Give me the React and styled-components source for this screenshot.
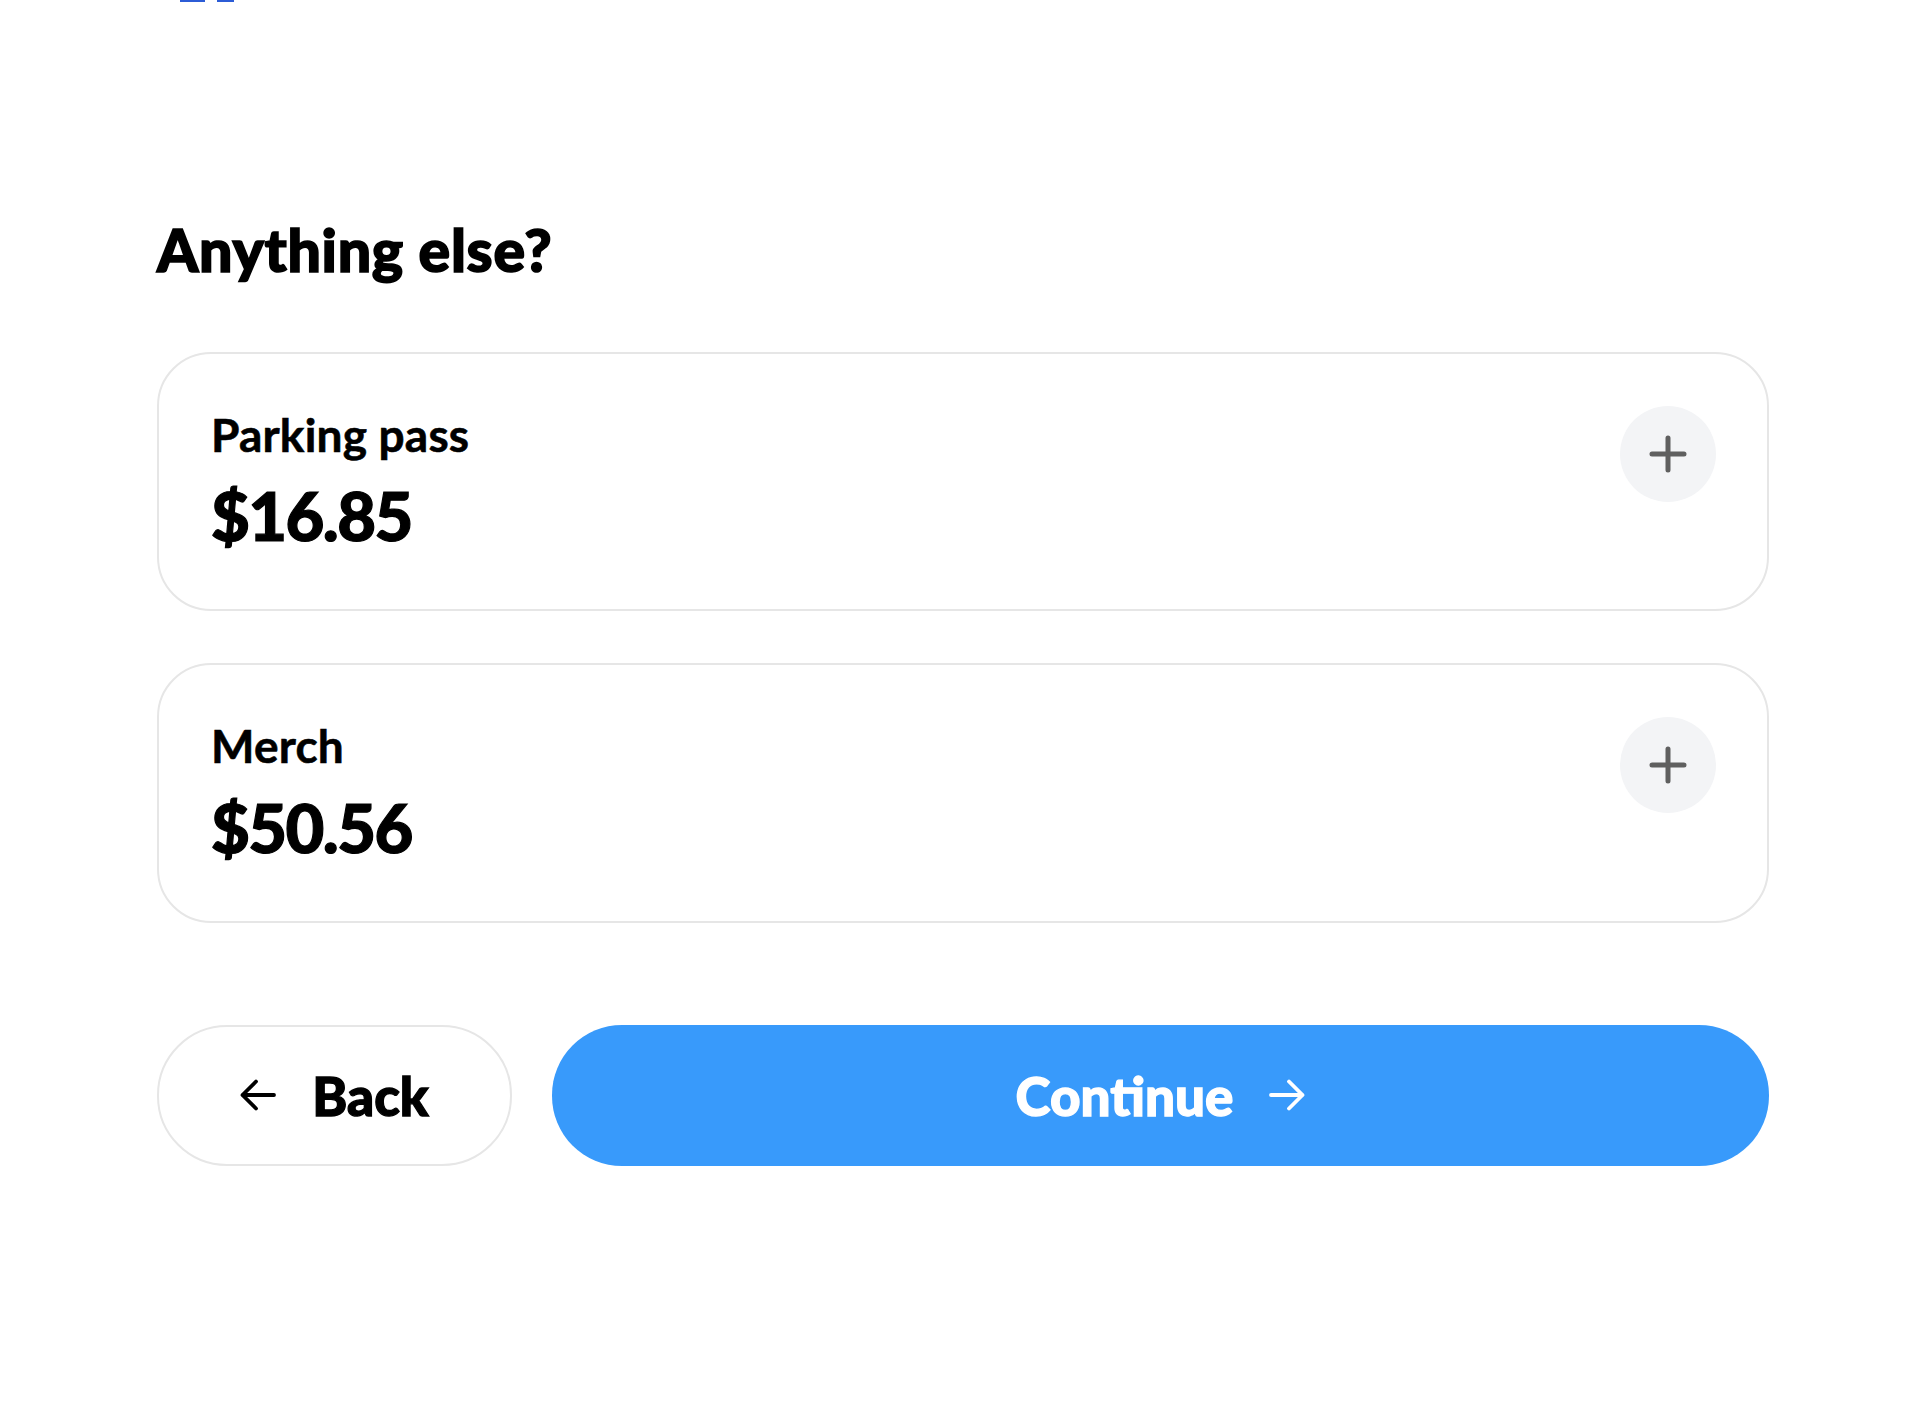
import React from "react";
import styled, { createGlobalStyle } from "styled-components";

const GlobalStyle = createGlobalStyle`
  html, body {
    margin: 0;
    padding: 0;
    background: #fff;
  }
  body {
    font-family: Lato, "Liberation Sans", sans-serif;
    color: #000;
  }
`;

const extras = [
  { id: "parking", name: "Parking pass", price: "$16.85" },
  { id: "merch", name: "Merch", price: "$50.56" },
];

const Page = styled.div`
  width: 1612px;
  padding: 0 0 0 157px;
  min-height: 1415px;
  box-sizing: content-box;
`;

const LogoPeek = styled.div`
  display: flex;
  gap: 12px;
  padding-left: 23px;
  height: 2px;
`;

const LogoBar = styled.span`
  display: block;
  width: ${(p) => p.w}px;
  height: 2px;
  background: #2c5cd6;
`;

const Title = styled.h1`
  margin: 213px 0 0;
  font-size: 59px;
  line-height: 1.2;
  font-weight: 900;
  letter-spacing: 0.7px;
  -webkit-text-stroke: 1.6px #000;
`;

const List = styled.div`
  display: flex;
  flex-direction: column;
  gap: 52px;
  margin-top: 66px;
`;

const Card = styled.div`
  display: flex;
  justify-content: space-between;
  align-items: flex-start;
  border: 2px solid #e6e6e6;
  border-radius: 54px;
  padding: 53px 51px 54px 52px;
`;

const Info = styled.div`
  display: flex;
  flex-direction: column;
  gap: 13px;
`;

const Name = styled.div`
  font-size: 46px;
  line-height: 1.2;
  font-weight: 700;
  letter-spacing: 0.2px;
  -webkit-text-stroke: 0.6px #000;
`;

const Price = styled.div`
  font-size: 67px;
  line-height: 1.2;
  font-weight: 900;
  letter-spacing: -1.6px;
  -webkit-text-stroke: 1.2px #000;
`;

const AddButton = styled.button`
  width: 96px;
  height: 96px;
  margin-top: -1px;
  border: none;
  border-radius: 50%;
  background: #f3f4f6;
  display: flex;
  align-items: center;
  justify-content: center;
  padding: 0;
  cursor: pointer;
`;

const Actions = styled.div`
  display: flex;
  gap: 40px;
  margin-top: 102px;
`;

const Button = styled.button`
  height: 141px;
  border-radius: 70px;
  display: flex;
  align-items: center;
  justify-content: center;
  gap: 36px;
  font-family: Lato, "Liberation Sans", sans-serif;
  font-size: 53px;
  font-weight: 900;
  letter-spacing: 0;
  cursor: pointer;
  box-sizing: border-box;
  border: ${(p) => (p.primary ? "none" : "2px solid #e6e6e6")};
  background: ${(p) => (p.primary ? "#389afb" : "#fff")};
  color: ${(p) => (p.primary ? "#fff" : "#000")};
  -webkit-text-stroke: 1.3px ${(p) => (p.primary ? "#fff" : "#000")};
  width: ${(p) => (p.primary ? "auto" : "355px")};
  flex: ${(p) => (p.primary ? 1 : "none")};
`;

const PlusIcon = () => (
  <svg width="38" height="38" viewBox="0 0 38 38" fill="none">
    <path d="M19 3v32M3 19h32" stroke="#5f5f5f" strokeWidth="5" strokeLinecap="round" />
  </svg>
);

const Arrow = ({ left, color }) => (
  <svg width="36" height="32" viewBox="0 0 36 32" fill="none">
    {left ? (
      <path d="M34 16H2.5M16 2.5L2.5 16L16 29.5" stroke={color} strokeWidth="3.8" strokeLinecap="round" strokeLinejoin="round" />
    ) : (
      <path d="M2 16h31.5M20 2.5L33.5 16L20 29.5" stroke={color} strokeWidth="3.8" strokeLinecap="round" strokeLinejoin="round" />
    )}
  </svg>
);

export default function App() {
  return (
    <>
      <GlobalStyle />
      <Page>
        <LogoPeek>
          <LogoBar w={25} />
          <LogoBar w={17} />
        </LogoPeek>
        <Title>Anything else?</Title>
        <List>
          {extras.map((item) => (
            <Card key={item.id}>
              <Info>
                <Name>{item.name}</Name>
                <Price>{item.price}</Price>
              </Info>
              <AddButton aria-label={`Add ${item.name}`}>
                <PlusIcon />
              </AddButton>
            </Card>
          ))}
        </List>
        <Actions>
          <Button>
            <Arrow left color="#000" />
            Back
          </Button>
          <Button primary>
            Continue
            <Arrow color="#fff" />
          </Button>
        </Actions>
      </Page>
    </>
  );
}
